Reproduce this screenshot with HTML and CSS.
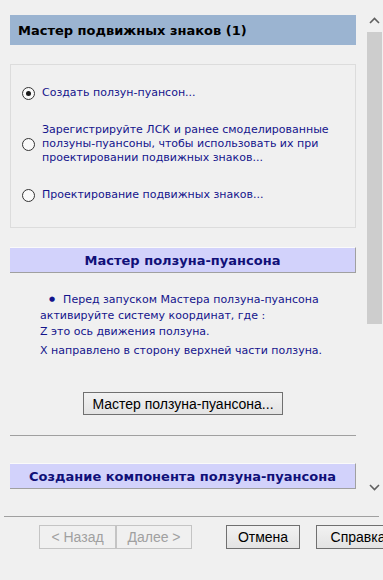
FILE: index.html
```html
<!DOCTYPE html>
<html>
<head>
<meta charset="utf-8">
<link rel="stylesheet" href="styles.css">
</head>
<body>
<div class="window">
  <div class="main">
    <div class="panel">
      <div class="title">Мастер подвижных знаков (1)</div>
      <div class="group">
        <label class="opt opt1"><span class="radio checked"></span><span class="opt-text">Создать ползун-пуансон...</span></label>
        <label class="opt opt2"><span class="radio"></span><span class="opt-text">Зарегистрируйте ЛСК и ранее смоделированные ползуны-пуансоны, чтобы использовать их при проектировании подвижных знаков...</span></label>
        <label class="opt opt3"><span class="radio"></span><span class="opt-text">Проектирование подвижных знаков...</span></label>
      </div>
      <div class="section">Мастер ползуна-пуансона</div>
      <div class="notes">
        <div class="bullet-line"><span class="dot">&#9679;</span>Перед запуском Мастера ползуна-пуансона</div>
        <div>активируйте систему координат, где :</div>
        <div>Z это ось движения ползуна.</div>
        <div class="last">X направлено в сторону верхней части ползуна.</div>
      </div>
      <div class="btn-row"><button class="btn wizard">Мастер ползуна-пуансона...</button></div>
      <div class="rule"></div>
      <div class="section">Создание компонента ползуна-пуансона</div>
    </div>
    <div class="scrollbar">
      <svg class="arrow up" width="11" height="7" viewBox="0 0 11 7"><path d="M1 6 L5.5 1.5 L10 6" fill="none" stroke="#606060" stroke-width="1.6"/></svg>
      <div class="track"><div class="thumb"></div></div>
      <svg class="arrow down" width="11" height="7" viewBox="0 0 11 7"><path d="M1 1 L5.5 5.5 L10 1" fill="none" stroke="#606060" stroke-width="1.6"/></svg>
    </div>
  </div>
  <div class="footer">
    <div class="nav-pair">
      <button class="btn fbtn disabled">&lt; Назад</button><button class="btn fbtn disabled">Далее &gt;</button>
    </div>
    <button class="btn fbtn cancel">Отмена</button>
    <button class="btn fbtn help">Справка</button>
  </div>
</div>
</body>
</html>
```
FILE: styles.css
```css
html, body {
  margin: 0;
  padding: 0;
  background: #f0f0f0;
}
body {
  width: 383px;
  height: 580px;
  overflow: hidden;
  font-family: "DejaVu Sans", sans-serif;
}
.window {
  display: flex;
  flex-direction: column;
  height: 580px;
}
.main {
  display: flex;
  height: 510px;
}
.panel {
  width: 346px;
  margin-left: 10px;
  padding-top: 15px;
  display: flex;
  flex-direction: column;
  flex: none;
}
.title {
  height: 30px;
  line-height: 31px;
  background: #9bb4d1;
  color: #000;
  font-weight: bold;
  font-size: 13px;
  padding-left: 8px;
}
.group {
  margin-top: 19px;
  height: 162px;
  border: 1px solid #dcdcdc;
  display: flex;
  flex-direction: column;
  padding-left: 11px;
}
.opt {
  display: flex;
  align-items: center;
  color: #14148c;
  font-size: 11px;
  line-height: 14px;
}
.opt1 { margin-top: 21px; }
.opt2 { margin-top: 23px; }
.opt3 { margin-top: 23px; }
.radio {
  width: 11px;
  height: 11px;
  border: 1px solid #333;
  border-radius: 50%;
  background: #fafafa;
  margin-right: 7px;
  flex: none;
  position: relative;
}
.radio.checked::after {
  content: "";
  position: absolute;
  left: 3px;
  top: 3px;
  width: 5px;
  height: 5px;
  border-radius: 50%;
  background: #1a1a1a;
}
.opt-text { width: 300px; }
.section {
  margin-top: 19px;
  height: 24px;
  line-height: 25px;
  background: #d2d2fb;
  border-top: 1px solid #fafafa;
  border-right: 1px solid #a0a0a0;
  border-bottom: 1px solid #a0a0a0;
  text-align: center;
  color: #101078;
  font-weight: bold;
  font-size: 13px;
}
.notes {
  margin-top: 18px;
  padding-left: 30px;
  color: #14148c;
  font-size: 11px;
  line-height: 16px;
}
.notes .last { margin-top: 3px; }
.bullet-line .dot {
  font-size: 7px;
  display: inline-block;
  margin-left: 9px;
  margin-right: 8px;
  vertical-align: 2px;
}
.btn-row {
  margin-top: 33px;
  display: flex;
  padding-left: 73px;
}
.btn {
  font-family: "Liberation Sans", Arial, sans-serif;
  font-size: 14px;
  color: #000;
  background: linear-gradient(#f2f2f2, #e3e3e3);
  border: 1px solid #707070;
  padding: 0;
  margin: 0;
  flex: none;
  white-space: nowrap;
}
.wizard {
  width: 200px;
  height: 23px;
}
.rule {
  margin-top: 20px;
  height: 1px;
  background: #a0a0a0;
}
.rule + .section { margin-top: 27px; }
.scrollbar {
  width: 17px;
  margin-left: 10px;
  display: flex;
  flex-direction: column;
  align-items: center;
  padding-top: 17px;
  flex: none;
}
.arrow { display: block; }
.track {
  width: 15px;
  height: 292px;
  margin-top: 8px;
}
.thumb {
  width: 15px;
  height: 292px;
  background: #cdcdcd;
}
.arrow.down { margin-top: 160px; }
.footer {
  border-top: 1px solid #a0a0a0;
  margin: 6px 0 0 4px;
  padding-top: 8px;
  display: flex;
  align-items: flex-start;
  width: 375px;
}
.nav-pair {
  display: flex;
  margin-left: 35px;
  flex: none;
}
.fbtn {
  height: 24px;
}
.fbtn.disabled {
  color: #a0a0a0;
  border-color: #c4c4c4;
  background: #f0f0f0;
  width: 77px;
}
.fbtn.disabled + .fbtn.disabled { width: 76px; }
.cancel {
  margin-left: 34px;
  width: 74px;
}
.help {
  margin-left: 16px;
  width: 84px;
}
```
